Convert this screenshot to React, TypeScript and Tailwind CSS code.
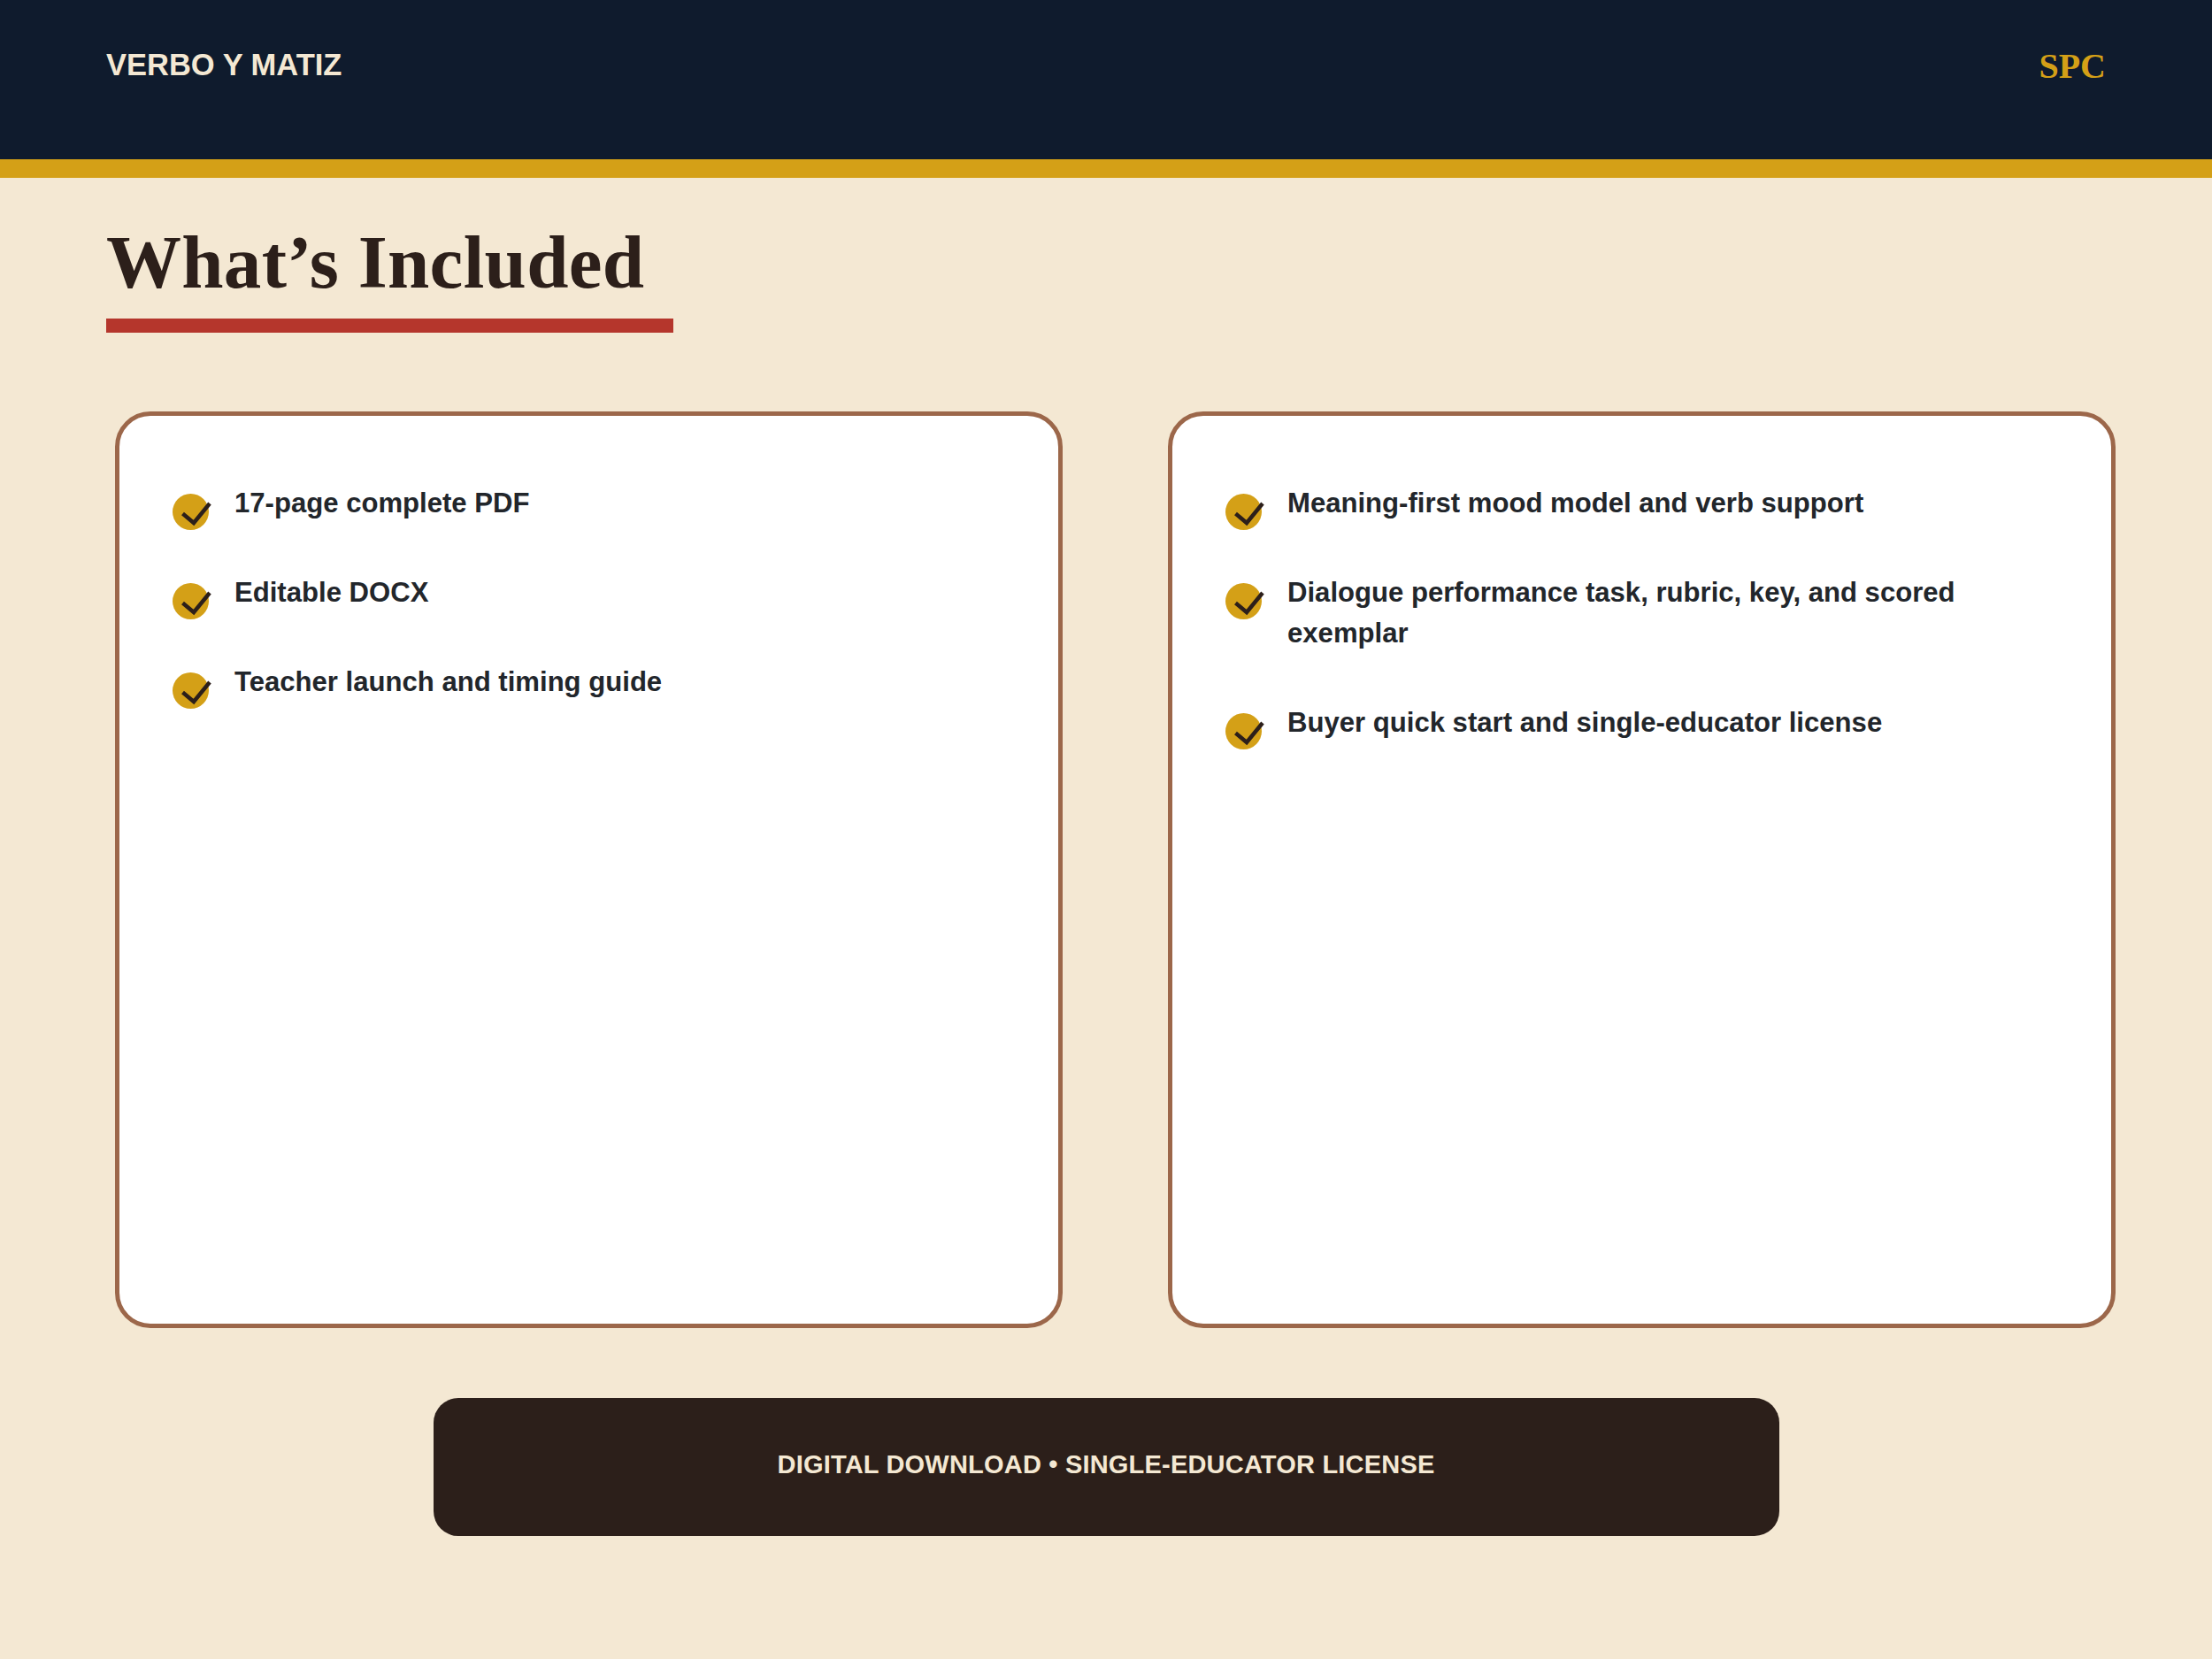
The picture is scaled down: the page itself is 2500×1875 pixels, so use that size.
const sans = "font-['Liberation_Sans',Arial,sans-serif]";

function Check() {
  return (
    <svg viewBox="0 0 44 42" className="mt-[12px] -mb-[8px] h-[42px] w-[44px] shrink-0" aria-hidden="true">
      <circle cx="20.5" cy="20.5" r="20.5" fill="#d4a017" />
      <path d="M11.5 22.5 L24 33 L42 11" fill="none" stroke="#2c1f1a" strokeWidth="4.5" />
    </svg>
  );
}

function Item({ children }: { children: React.ReactNode }) {
  return (
    <li className="flex gap-[26px]">
      <Check />
      <span className="text-[31.1px] leading-[46px] font-bold text-[#22262b]">{children}</span>
    </li>
  );
}

function Card({ items }: { items: string[] }) {
  return (
    <ul className="flex h-[1036px] w-[1071px] flex-col gap-[55px] rounded-[40px] border-[5px] border-[#9c674a] bg-white pt-[76px] pr-[100px] pl-[60px]">
      {items.map((t) => (
        <Item key={t}>{t}</Item>
      ))}
    </ul>
  );
}

export default function App() {
  return (
    <div className={`h-[1875px] w-[2500px] overflow-hidden bg-[#f4e8d3] ${sans}`}>
      <header className="flex h-[201px] items-start justify-between border-b-[21px] border-[#d4a017] bg-[#0f1b2d] px-[120px] pt-[52px]">
        <span className="text-[34.5px] leading-[42px] font-bold text-[#f4e8d3]">VERBO Y MATIZ</span>
        <span className="font-['Liberation_Serif',serif] text-[40px] leading-[46px] font-bold text-[#d4a017]">SPC</span>
      </header>
      <div className="px-[120px] pt-[49px]">
        <h1 className="font-['Liberation_Serif',serif] text-[85px] leading-[92px] font-bold tracking-[0.3px] text-[#2c1f1a]">
          What’s Included
        </h1>
        <div className="mt-[18px] h-[16px] w-[641px] bg-[#b5362c]" />
      </div>
      <div className="mt-[89px] flex gap-[119px] pl-[130px]">
        <Card items={["17-page complete PDF", "Editable DOCX", "Teacher launch and timing guide"]} />
        <Card
          items={[
            "Meaning-first mood model and verb support",
            "Dialogue performance task, rubric, key, and scored exemplar",
            "Buyer quick start and single-educator license",
          ]}
        />
      </div>
      <div className="mx-auto mt-[79px] flex h-[156px] w-[1521px] items-center justify-center rounded-[28px] bg-[#2c1f1a] pb-[6px]">
        <span className="text-[29px] leading-[36px] font-bold tracking-[0.2px] text-[#f4e8d3]">
          DIGITAL DOWNLOAD • SINGLE-EDUCATOR LICENSE
        </span>
      </div>
    </div>
  );
}
